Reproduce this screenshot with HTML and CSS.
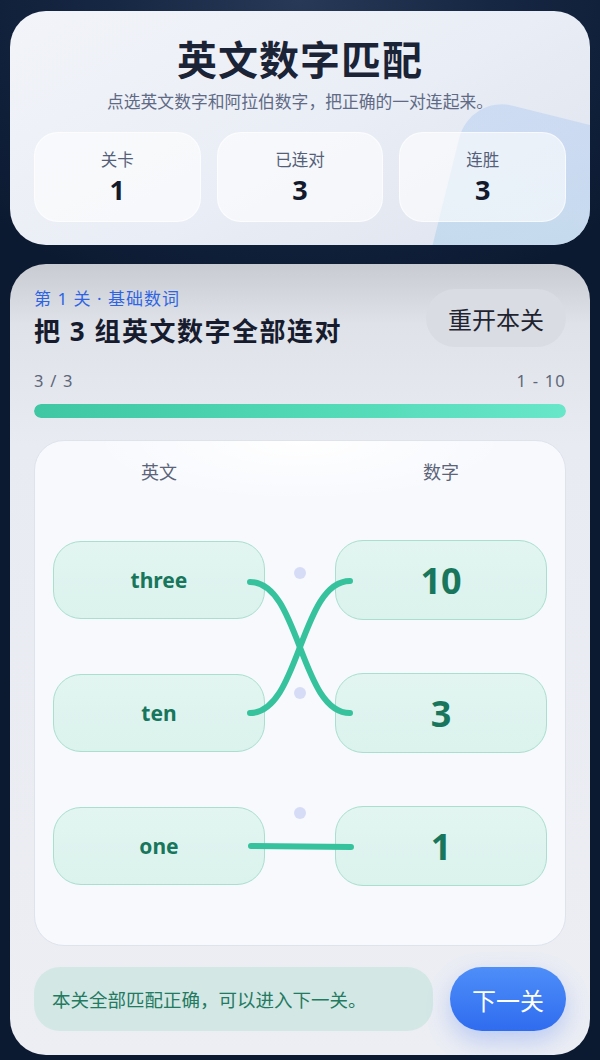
FILE: index.html
```html
<!DOCTYPE html>
<html lang="zh-CN">
<head>
<meta charset="utf-8">
<title>英文数字匹配</title>
<link rel="stylesheet" href="styles.css">
</head>
<body>
<main class="page">
  <section class="hero">
    <div class="hero-blob"></div>
    <h1 class="hero-title">英文数字匹配</h1>
    <p class="hero-sub">点选英文数字和阿拉伯数字，把正确的一对连起来。</p>
    <div class="stats">
      <div class="stat"><span class="stat-label">关卡</span><span class="stat-value">1</span></div>
      <div class="stat"><span class="stat-label">已连对</span><span class="stat-value">3</span></div>
      <div class="stat"><span class="stat-label">连胜</span><span class="stat-value">3</span></div>
    </div>
  </section>

  <section class="game">
    <div class="game-head">
      <div class="game-titles">
        <div class="level-tag">第 1 关 · 基础数词</div>
        <h2 class="level-title">把 3 组英文数字全部连对</h2>
      </div>
      <button class="btn-restart">重开本关</button>
    </div>
    <div class="progress-meta"><span>3 / 3</span><span>1 - 10</span></div>
    <div class="progress"><div class="progress-fill"></div></div>

    <div class="board">
      <div class="col-head col-left">英文</div>
      <div class="col-head col-right">数字</div>

      <div class="item word r1">three</div>
      <div class="item word r2">ten</div>
      <div class="item word r3">one</div>

      <div class="dots">
        <span class="dot"></span><span class="dot"></span><span class="dot"></span>
      </div>

      <div class="item num r1">10</div>
      <div class="item num r2">3</div>
      <div class="item num r3">1</div>

      <svg class="links" viewBox="0 0 531 504" width="531" height="504" aria-hidden="true">
        <path d="M215 141 C 265 141, 265 272, 315 272" />
        <path d="M215 272 C 265 272, 265 140, 315 140" />
        <path d="M216 405 L 316 406" />
      </svg>
    </div>

    <div class="footer">
      <div class="status">本关全部匹配正确，可以进入下一关。</div>
      <button class="btn-next">下一关</button>
    </div>
  </section>
</main>
</body>
</html>
```
FILE: styles.css
```css
* { box-sizing: border-box; }
html, body { margin: 0; padding: 0; }
body {
  width: 600px;
  min-height: 1060px;
  font-family: "Noto Sans", "Noto Sans CJK SC", sans-serif;
  background: radial-gradient(ellipse 70% 30% at 50% 0%, #283957 0%, #162744 45%, #0c1a31 100%);
  background-color: #0c1a31;
}
.page { padding: 11px 10px 5px; }

.hero {
  position: relative;
  overflow: hidden;
  border-radius: 36px;
  padding: 23px 24px 23px;
  background: linear-gradient(150deg, #f2f4f9 0%, #e9edf5 55%, #dde3ee 100%);
  text-align: center;
}
.hero-blob {
  position: absolute;
  left: 460px;
  top: 84px;
  width: 280px;
  height: 280px;
  border-radius: 44px;
  transform-origin: top left;
  transform: rotate(14deg);
  background: linear-gradient(180deg, rgba(190, 210, 242, 0.6) 0%, rgba(178, 216, 232, 0.7) 100%);
}
.hero-title {
  position: relative;
  margin: 0;
  font-family: "Noto Sans CJK SC", sans-serif;
  font-size: 40px;
  line-height: 48px;
  font-weight: 700;
  color: #1b2336;
  letter-spacing: 1px;
}
.hero-sub {
  position: relative;
  margin: 8px 0 0;
  font-size: 16.8px;
  line-height: 24px;
  color: #5f6a85;
}
.stats {
  position: relative;
  margin-top: 18px;
  display: grid;
  grid-template-columns: repeat(3, 1fr);
  gap: 16px;
}
.stat {
  height: 90px;
  border-radius: 24px;
  background: rgba(255, 255, 255, 0.6);
  border: 1px solid rgba(255, 255, 255, 0.65);
  display: flex;
  flex-direction: column;
  align-items: center;
  justify-content: center;
  gap: 3px;
}
.stat-label { font-size: 16.5px; line-height: 22px; color: #545f79; }
.stat-value { font-size: 27px; line-height: 31px; font-weight: 700; color: #121a2c; }

.game {
  margin-top: 19px;
  border-radius: 36px;
  padding: 23px 24px 24px;
  background: linear-gradient(180deg, #c8cbd2 0px, #dfe2e9 60px, #e8ebf1 180px, #eceef4 100%);
}
.game-head {
  display: flex;
  align-items: center;
  justify-content: space-between;
}
.level-tag { font-size: 17px; line-height: 24px; color: #2e64e3; letter-spacing: 1px; }
.level-title {
  margin: 3px 0 0;
  font-size: 26px;
  line-height: 35px;
  font-weight: 700;
  color: #161c2e;
  letter-spacing: 1.5px;
}
.btn-restart {
  height: 58px;
  padding: 0 22px;
  border: 0;
  border-radius: 29px;
  background: #d9dce3;
  font-family: inherit;
  font-size: 24px;
  color: #1f2430;
}
.progress-meta {
  margin-top: 21px;
  display: flex;
  justify-content: space-between;
  font-size: 16.5px;
  line-height: 22px;
  color: #5d6779;
  letter-spacing: 1.2px;
}
.progress {
  margin-top: 12px;
  height: 14px;
  border-radius: 7px;
  background: #dfe3ea;
  overflow: hidden;
}
.progress-fill {
  width: 100%;
  height: 100%;
  border-radius: 7px;
  background: linear-gradient(90deg, #3ec7a2 0%, #52d9b6 55%, #68e7c9 100%);
}

.board {
  position: relative;
  margin-top: 22px;
  height: 506px;
  border: 1px solid #dfe3ec;
  border-radius: 30px;
  background: radial-gradient(ellipse 40% 12% at 50% 0%, #ffffff 0%, rgba(255,255,255,0) 100%), #f7f9fd;
  padding: 18px 18px 0;
  display: grid;
  grid-template-columns: 1fr 70px 1fr;
  grid-template-rows: 28px 80px 80px 80px;
  row-gap: 53px;
  align-items: center;
}
.col-head {
  grid-row: 1;
  align-self: start;
  text-align: center;
  font-size: 18px;
  line-height: 26px;
  color: #5b6478;
}
.col-left { grid-column: 1; }
.col-right { grid-column: 3; }
.r1 { grid-row: 2; }
.r2 { grid-row: 3; }
.r3 { grid-row: 4; }
.item {
  display: flex;
  align-items: center;
  justify-content: center;
  border: 1px solid #a8dfce;
  background: linear-gradient(180deg, #e2f5f1 0%, #dbf2ed 100%);
  color: #17765b;
  font-weight: 700;
}
.word {
  grid-column: 1;
  height: 78px;
  border-radius: 28px;
  font-size: 21px;
}
.num {
  grid-column: 3;
  height: 80px;
  border-radius: 28px;
  font-size: 36px;
}
.dots {
  grid-column: 2;
  grid-row: 2 / 5;
  align-self: start;
  display: flex;
  flex-direction: column;
  align-items: center;
  padding-top: 27px;
  gap: 108px;
}
.dot {
  display: block;
  width: 12px;
  height: 12px;
  border-radius: 50%;
  background: #d6dcf6;
}
.links {
  position: absolute;
  left: 0;
  top: 0;
  overflow: visible;
  pointer-events: none;
}
.links path {
  fill: none;
  stroke: #36c29c;
  stroke-width: 6;
  stroke-linecap: round;
}

.footer {
  margin-top: 21px;
  display: flex;
  gap: 17px;
}
.status {
  flex: 1;
  height: 64px;
  border-radius: 26px;
  background: #d3e7e5;
  padding-left: 18px;
  display: flex;
  align-items: center;
  font-size: 18.5px;
  color: #227a5f;
}
.btn-next {
  width: 116px;
  height: 64px;
  border: 0;
  border-radius: 32px;
  background: linear-gradient(180deg, #4d8ef9 0%, #2f6cef 100%);
  box-shadow: 0 10px 24px rgba(60, 110, 240, 0.28);
  font-family: inherit;
  font-size: 24px;
  color: #ffffff;
}
```
